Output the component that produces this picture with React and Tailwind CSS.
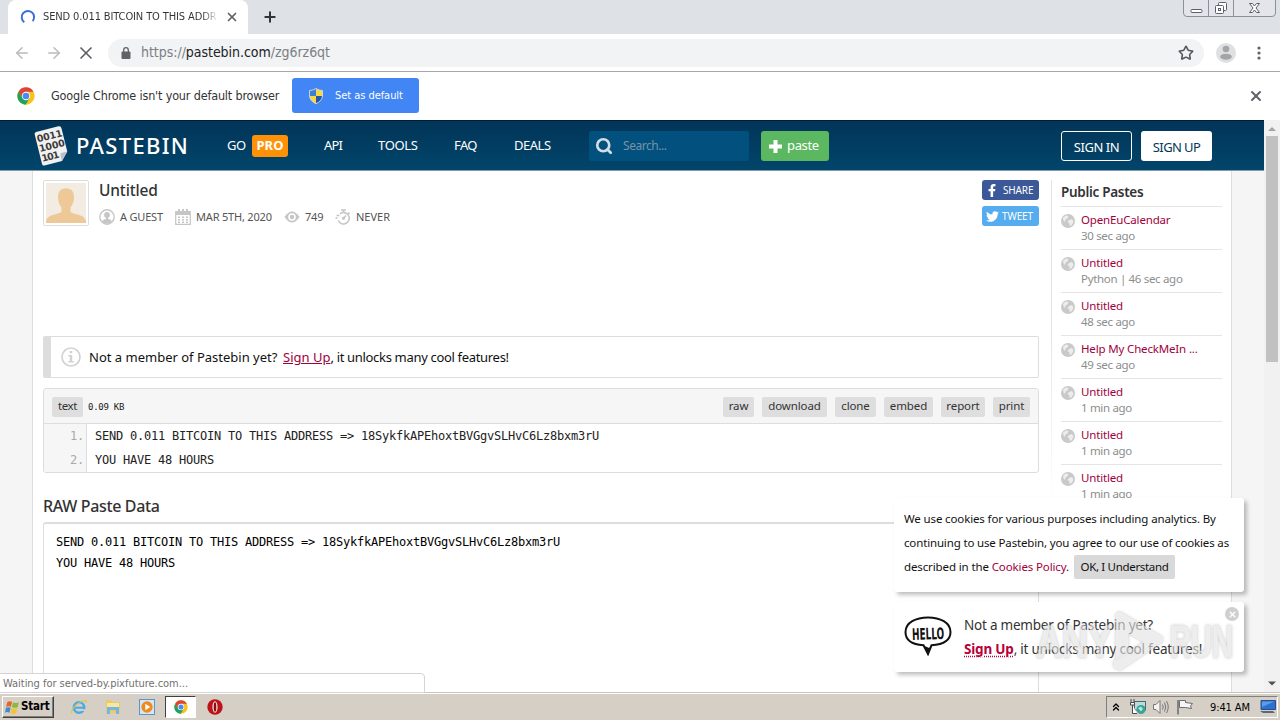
import {
    Star,
    Plus,
    X,
    Search,
    ArrowLeft,
    ArrowRight,
    ChevronsUp
} from "lucide-react";
import { FaFacebookF, FaTwitter } from "react-icons/fa";

const uiFont = "font-['DejaVu_Sans_Condensed','DejaVu_Sans',sans-serif]";
const pageFont = "font-['Noto_Sans',sans-serif]";
const monoFont = "font-['DejaVu_Sans_Mono',monospace]";

const publicPastes = [
    { title: "OpenEuCalendar", age: "30 sec ago" },
    { title: "Untitled", age: "Python | 46 sec ago" },
    { title: "Untitled", age: "48 sec ago" },
    { title: "Help My CheckMeIn ...", age: "49 sec ago" },
    { title: "Untitled", age: "1 min ago" },
    { title: "Untitled", age: "1 min ago" },
    { title: "Untitled", age: "1 min ago" }
];

const pasteActions = [
    { label: "raw", width: "w-[31px]" },
    { label: "download", width: "w-[65px]" },
    { label: "clone", width: "w-[41px]" },
    { label: "embed", width: "w-[49px]" },
    { label: "report", width: "w-[44px]" },
    { label: "print", width: "w-[37px]" }
];

const pasteLines = [
    "SEND 0.011 BITCOIN TO THIS ADDRESS => 18SykfkAPEhoxtBVGgvSLHvC6Lz8bxm3rU",
    "YOU HAVE 48 HOURS"
];

const ChromeLogo = ({ className }) => (
    <svg viewBox="0 0 24 24" className={className}>
        <circle cx="12" cy="12" r="11.5" fill="#fbc116" />
        <path d="M2 6.3A11.5 11.5 0 0 1 22 6.3L12 6.3L7.2 14.8Z" fill="#dd4637" />
        <path d="M2 6.3A11.5 11.5 0 0 0 11.5 23.5L16.8 14.8L12 12L7.2 14.8Z" fill="#1da261" />
        <circle cx="12" cy="12" r="5.6" fill="#fff" />
        <circle cx="12" cy="12" r="4.4" fill="#4a8af4" />
    </svg>
);

const ShieldLogo = () => (
    <svg viewBox="0 0 16 16" className="h-4 w-4">
        <path d="M8 .5C5.500 2 3.500 2.300 1.500 2.500V8H8Z" fill="#3c7fd6" />
        <path d="M8 .5C10.500 2 12.500 2.300 14.500 2.500V8H8Z" fill="#f8d847" />
        <path d="M1.500 8C1.800 12 5 14.500 8 15.700V8Z" fill="#f8d847" />
        <path d="M14.500 8C14.200 12 11 14.500 8 15.700V8Z" fill="#2459a8" />
        <path d="M8 .5C5.500 2 3.500 2.300 1.500 2.500V8C1.800 12 5 14.500 8 15.700C11 14.500 14.200 12 14.500 8V2.500C12.500 2.300 10.500 2 8 .5Z" fill="none" stroke="#c9d3dc" strokeWidth="1" />
    </svg>
);

const TabStrip = () => (
    <div className="relative flex h-[34px] bg-[#dee1e6] pl-2">
        <div className="flex h-[34px] w-[240px] items-center rounded-t-lg bg-white pl-3">
            <svg viewBox="0 0 16 16" className="h-4 w-4">
                <path d="M4.300 13.200A6.200 6.200 0 1 1 12.600 12.200" fill="none" stroke="#3b6fd4" strokeWidth="2" />
            </svg>
            <span className="ml-[7px] w-[177px] overflow-hidden whitespace-nowrap bg-gradient-to-r from-[#303236] from-90% to-transparent to-99% bg-clip-text text-[11px] tracking-[-0.12px] text-transparent">
                SEND 0.011 BITCOIN TO THIS ADDR
            </span>
            <X className="ml-[5px] h-[14px] w-[14px] text-[#5f6368]" strokeWidth={3} />
        </div>
        <div className="flex items-center pl-[14px]">
            <Plus className="h-4 w-4 text-[#303338]" strokeWidth={3} />
        </div>
        {/* Window buttons */}
        <div className="absolute right-[4px] top-[-3px] flex h-[20px] w-[93px] rounded-b-[4px] border border-[#8b909c] bg-[#e3e5ea]">
            <svg viewBox="0 0 91 18" className="h-[18px] w-[91px]" fill="none" stroke="#5a606c">
                <path d="M24.500 0V18M49.500 0V18" stroke="#8b909c" />
                <rect x="7" y="11.500" width="11" height="3" rx="1" fill="#fff" />
                <rect x="34.500" y="4.500" width="8" height="8" rx="1" fill="#fff" />
                <rect x="31.500" y="7.500" width="8" height="8" rx="1" fill="#fff" />
                <rect x="34.500" y="10.500" width="2" height="2" />
                <path d="M65.500 5.500h3l2 2.500 2-2.500h3l-3.500 4.500 3.500 4.500h-3l-2-2.500-2 2.500h-3l3.500-4.500Z" fill="#fff" />
            </svg>
        </div>
    </div>
);

const Toolbar = () => (
    <div className="flex h-[38px] items-center border-b border-[#a8a8a8] bg-white pl-[13px]">
        <ArrowLeft className="h-[18px] w-[18px] text-[#b9bbbe]" />
        <ArrowRight className="ml-[14px] h-[18px] w-[18px] text-[#b9bbbe]" />
        <X className="ml-[13px] h-5 w-5 text-[#5a5d61]" />
        <div className="ml-[12px] flex h-[28px] w-[1096px] items-center rounded-full bg-[#f1f3f4] pl-[12px]">
            <svg viewBox="0 0 12 12" className="h-3 w-3">
                <rect x="1.500" y="4.500" width="9" height="7.500" rx="1" fill="#5f6368" />
                <path d="M3.700 5V3A2.300 2.300 0 0 1 8.300 3V5" fill="none" stroke="#5f6368" strokeWidth="1.300" />
            </svg>
            <span className="ml-[9px] whitespace-nowrap text-[14px] tracking-[-0.04px] text-[#7b7f84]">
                https://<span className="text-[#202124]">pastebin.com</span>/zg6rz6qt
            </span>
            <Star className="ml-auto mr-[10px] h-4 w-4 text-[#54575b]" strokeWidth={2.4} />
        </div>
        <svg viewBox="0 0 20 20" className="ml-[12px] h-5 w-5">
            <circle cx="10" cy="10" r="10" fill="#dfe0e2" />
            <circle cx="10" cy="6" r="3.300" fill="#a3a5a8" />
            <ellipse cx="10" cy="13.700" rx="5.800" ry="3" fill="#a3a5a8" />
        </svg>
        <svg viewBox="0 0 4 14" className="ml-[21px] h-[14px] w-1" fill="#5f6368">
            <circle cx="2" cy="2" r="1.600" />
            <circle cx="2" cy="7" r="1.600" />
            <circle cx="2" cy="12" r="1.600" />
        </svg>
    </div>
);

const InfoBar = () => (
    <div className="flex h-[48px] items-center bg-white pl-[17px]">
        <ChromeLogo className="h-[18px] w-[18px]" />
        <span className="ml-[16px] w-[241px] whitespace-nowrap text-[12.500px] tracking-[-0.17px] text-[#333]">
            Google Chrome isn't your default browser
        </span>
        <button className="mb-px flex h-[35px] w-[127px] items-center rounded-[3px] bg-[#4285f4] pl-4 text-white">
            <ShieldLogo />
            <span className="ml-[11px] whitespace-nowrap pt-[2px] text-[11px] tracking-[-0.05px]">Set as default</span>
        </button>
        <X className="ml-auto mr-[16px] h-4 w-4 text-[#5f6368]" strokeWidth={3} />
    </div>
);

const PastebinLogo = () => (
    <svg viewBox="0 0 36 40" className="h-[40px] w-[36px]">
        <g transform="rotate(-14 18 20)">
            <path d="M6 2.500H29Q31.500 2.500 31.500 5V29L24 37H6Q4 37 4 35V5Q4 2.500 6 2.500Z" fill="#f1f1f1" />
            <path d="M31.500 29L24 37V31Q24 29 26 29Z" fill="#b9c2c9" />
            <g fontFamily="DejaVu Sans" fontWeight="bold" fontSize="9.500" fill="#3b3b3b">
                <text x="5" y="13" textLength="26">0011</text>
                <text x="5" y="23" textLength="26">1000</text>
                <text x="5" y="33" textLength="18">101</text>
            </g>
        </g>
    </svg>
);

const SiteHeader = () => (
    <header className="flex h-[51px] shrink-0 items-center whitespace-nowrap border-b border-t border-b-[#7e9aab] border-t-[#011f33] bg-gradient-to-b from-[#023558] to-[#02456b] pl-[34px] text-[13px] text-white">
        <PastebinLogo />
        <span className="ml-[6px] w-[151px] text-[22px] font-medium tracking-[1.3px]">PASTEBIN</span>
        <span className="w-[25px] tracking-[-0.5px]">GO</span>
        <span className="flex h-[22px] w-[36px] items-center justify-center rounded-[3px] bg-[#ff9107] text-[13px] font-bold">PRO</span>
        <span className="ml-[36px] w-[54px] tracking-[-0.8px]">API</span>
        <span className="w-[76px] tracking-[-0.31px]">TOOLS</span>
        <span className="w-[60px] tracking-[-0.6px]">FAQ</span>
        <span className="w-[75px] tracking-[-0.49px]">DEALS</span>
        <div className="flex h-[30px] w-[160px] items-center rounded-[2px] bg-[#02507d] pl-[6px]">
            <Search className="h-[18px] w-[18px] text-[#d3dde4]" strokeWidth={3.6} />
            <span className="ml-[10px] text-[12px] tracking-[-0.45px] text-[#7693a8]">Search...</span>
        </div>
        <button className="ml-[12px] flex h-[30px] w-[68px] items-center rounded-[3px] bg-[#5cb860] pl-[8px]">
            <svg viewBox="0 0 13 13" className="mt-px h-[13px] w-[13px]" fill="#fff">
                <path d="M4.500 0H8.500V4.500H13V8.500H8.500V13H4.500V8.500H0V4.500H4.500Z" />
            </svg>
            <span className="ml-[5px] text-[13px] tracking-[-0.35px]">paste</span>
        </button>
        <button className="ml-[232px] h-[30px] w-[71px] rounded-[3px] border border-white pt-[4px] tracking-[-0.43px]">SIGN IN</button>
        <button className="ml-[9px] h-[30px] w-[71px] rounded-[3px] bg-white pt-[4px] tracking-[-0.61px] text-[#023859]">SIGN UP</button>
    </header>
);

const Avatar = () => (
    <div className="h-[46px] w-[46px] rounded-[2px] border border-[#ddd] bg-white p-[2px]">
        <svg viewBox="0 0 40 40" className="h-[40px] w-[40px]">
            <rect width="40" height="40" fill="#f2ece3" />
            <path d="M12 14C12 8 15 5.500 20 5.500S28 8 28 14C28 19 26.500 22 24.500 24.500V29C29 32 38 31 40 38V40H0V38C2 31 11 32 15.500 29V24.500C13.500 22 12 19 12 14Z" fill="#eec896" />
        </svg>
    </div>
);

const PasteInfo = () => (
    <div className="flex h-[16px] items-center whitespace-nowrap text-[11px] text-[#555]">
        <svg viewBox="0 0 16 16" className="h-4 w-4" fill="#c6c6c6">
            <circle cx="8" cy="8" r="7.200" fill="none" stroke="#c6c6c6" strokeWidth="1.400" />
            <circle cx="8" cy="6" r="2.900" />
            <path d="M7 8H9V10Q12.500 10.500 12.800 12.500Q8 17 3.200 12.500Q3.500 10.500 7 10Z" />
        </svg>
        <span className="ml-[5px] w-[55px] tracking-[-0.2px]">A GUEST</span>
        <svg viewBox="0 0 16 16" className="h-4 w-4" fill="#c6c6c6">
            <path d="M.700 2.500H15.300V15.300H.700Z" fill="none" stroke="#c6c6c6" strokeWidth="1.200" />
            <path d="M1 2.500H15V6H1ZM3 0H5V3H3ZM7 0H9V3H7ZM11 0H13V3H11Z" />
            <path d="M3 7.500H5V9H3ZM7 7.500H9V9H7ZM11 7.500H13V9H11ZM3 10H5V11.500H3ZM7 10H9V11.500H7ZM11 10H13V11.500H11ZM3 12.500H5V14H3ZM7 12.500H9V14H7ZM11 12.500H13V14H11Z" />
        </svg>
        <span className="ml-[5px] w-[88px] tracking-[-0.19px]">MAR 5TH, 2020</span>
        <svg viewBox="0 0 16 16" className="h-4 w-4">
            <path d="M.5 8Q8-3 15.500 8Q8 19 .5 8Z" fill="#c6c6c6" />
            <circle cx="8" cy="8" r="3.800" fill="#fff" />
            <circle cx="8" cy="8" r="2.200" fill="#c6c6c6" />
        </svg>
        <span className="ml-[5px] w-[30px] tracking-[-0.2px]">749</span>
        <svg viewBox="0 0 16 16" className="h-4 w-4" fill="none" stroke="#c6c6c6" strokeWidth="1.600">
            <path d="M5 4.800A5.700 5.700 0 1 1 3.300 11.500" />
            <path d="M6 1H11M8.500 1V4M13 3.500L14.500 5M8.500 9.300L11 6.500M1.500 6.500H4.500M.5 9H2.500" />
            <circle cx="8.500" cy="9.300" r=".8" />
        </svg>
        <span className="ml-[5px]">NEVER</span>
    </div>
);

const ShareButtons = () => (
    <div className="ml-auto flex w-[57px] flex-col gap-[6px] text-[10px] text-white">
        <button className="flex h-5 items-center rounded-[3px] bg-[#3b5998] pl-[5px]">
            <FaFacebookF className="h-[13px] w-[10px]" />
            <span className="ml-[6px] tracking-[-0.15px]">SHARE</span>
        </button>
        <button className="flex h-5 items-center rounded-[3px] bg-[#55acee] pl-[4px]">
            <FaTwitter className="h-[13px] w-[13px]" />
            <span className="ml-[3px] tracking-[-0.1px]">TWEET</span>
        </button>
    </div>
);

const PasteMain = () => (
    <main className="flex w-[996px] shrink-0 flex-col whitespace-nowrap pt-[9px]">
        <div className="flex h-[46px] shrink-0">
            <Avatar />
            <div className="ml-[10px]">
                <h1 className="h-[29px] text-[15.500px] font-medium leading-[21px] tracking-[-0.15px] text-[#333]">Untitled</h1>
                <PasteInfo />
            </div>
            <ShareButtons />
        </div>

        <div className="mt-[110px] flex h-[42px] shrink-0 items-center rounded-[2px] border border-l-8 border-[#ddd] pl-[10px] text-[13px] text-[#111]">
            <svg viewBox="0 0 20 20" className="h-5 w-5">
                <circle cx="10" cy="10" r="9" fill="none" stroke="#d2d2d2" strokeWidth="1.700" />
                <path d="M8.800 4H11.200V6.300H8.800ZM7.300 8H11.200V14H12.700V15.500H7.300V14H8.800V9.500H7.300Z" fill="#d2d2d2" />
            </svg>
            <p className="ml-[8px] flex pt-[2px]">
                <span className="w-[194px]">Not a member of Pastebin yet?</span>
                <a className="text-[#a0003c] underline">Sign Up</a>
                <span className="tracking-[-0.32px]">, it unlocks many cool features!</span>
            </p>
        </div>

        <section className="mt-[10px] h-[85px] shrink-0 overflow-hidden rounded-[3px] border border-[#ddd]">
            <div className="flex h-[35px] items-center border-b border-[#ddd] bg-[#f6f6f6] px-[8px] pt-px text-[11.500px] text-[#333]">
                <span className="flex h-5 w-[31px] items-center justify-center rounded-[2px] bg-[#dedede] pb-px tracking-[-0.35px]">text</span>
                <span className={`ml-[5px] pt-[2px] text-[9px] tracking-[-0.25px] text-[#222] ${monoFont}`}>0.09 KB</span>
                <div className="ml-auto flex gap-2">
                    {pasteActions.map((action) => (
                        <button key={action.label} className={`flex h-5 items-center justify-center rounded-[2px] bg-[#dedede] pb-px tracking-[-0.1px] ${action.width}`}>
                            {action.label}
                        </button>
                    ))}
                </div>
            </div>
            <ol className={`text-[12px] leading-[24px] tracking-[-0.224px] ${monoFont}`}>
                {pasteLines.map((line, i) => (
                    <li key={line} className="flex h-6">
                        <span className="w-[43px] border-r border-[#ddd] bg-[#f6f6f6] pr-[2px] text-right text-[#aaa]">{i + 1}.</span>
                        <span className="pl-[8px] text-[#222]">{line}</span>
                    </li>
                ))}
            </ol>
        </section>

        <h2 className="mt-[21px] h-[28px] shrink-0 text-[16px] font-medium leading-[24px] tracking-[-0.35px] text-[#333]">RAW Paste Data</h2>
        <div className={`h-[200px] shrink-0 rounded-[3px] border border-t-2 border-[#ddd] pl-3 pt-[8px] text-[12px] leading-[21px] tracking-[-0.224px] text-black ${monoFont}`}>
            {pasteLines.map((line) => (
                <p key={line}>{line}</p>
            ))}
        </div>
    </main>
);

const Sidebar = () => (
    <aside className="ml-[12px] mt-[9px] flex h-[330px] w-[171px] whitespace-nowrap">
        <div className="w-px shrink-0 bg-gradient-to-b from-[#e2e2e2] from-40% to-white" />
        <div className="ml-[9px] w-[161px] shrink-0">
            <h3 className="h-[26px] text-[13.500px] font-semibold leading-[24px] tracking-[-0.3px] text-[#333]">Public Pastes</h3>
            {publicPastes.map((paste, i) => (
                <div key={i} className="flex h-[43px] border-t border-[#e4e4e4] pt-[5px]">
                    <svg viewBox="0 0 14 14" className="mt-[2px] h-[14px] w-[14px]">
                        <circle cx="7" cy="7" r="7" fill="#c9c9c9" />
                        <path d="M2 3.500L5 1.500L7.500 2L6.500 4.500L4.500 5.500L4 8L2.500 6.500ZM8 6L11 5L12.500 7.500L11 11L8.500 12L8.500 9.500L6.500 8Z" fill="#ededed" />
                    </svg>
                    <div className="ml-[6px] text-[11.500px] leading-[16px]">
                        <p className="tracking-[-0.16px] text-[#a0003c]">{paste.title}</p>
                        <p className="tracking-[-0.32px] text-[#8d8d8d]">{paste.age}</p>
                    </div>
                </div>
            ))}
        </div>
    </aside>
);

const Scrollbar = () => (
    <div className="flex w-4 flex-col items-center bg-[#f1f1f1]">
        <svg viewBox="0 0 16 16" className="h-4 w-4">
            <path d="M4 11L8 7L12 11Z" fill="#a3a3a3" />
        </svg>
        <div className="h-[226px] w-[12px] bg-[#c1c1c1]" />
        <svg viewBox="0 0 16 16" className="mt-auto h-4 w-4">
            <path d="M4 5.500H12L8 9.500Z" fill="#505050" />
        </svg>
    </div>
);

const CookieNotice = () => (
    <div className="absolute left-[894px] top-[498px] h-[94px] w-[350px] whitespace-nowrap rounded-[3px] bg-white pl-[10px] pt-[9px] text-[11.500px] leading-[24px] tracking-[-0.13px] text-[#111] shadow-[3px_3px_4px_rgba(0,0,0,0.25)]">
        <p>We use cookies for various purposes including analytics. By</p>
        <p className="tracking-[-0.15px]">continuing to use Pastebin, you agree to our use of cookies as</p>
        <div className="flex items-center">
            <span className="w-[170px] tracking-[-0.12px]">
                described in the <a className="text-[#a0003c]">Cookies Policy</a>.
            </span>
            <button className="h-6 w-[101px] rounded-[2px] bg-[#d9d9d9] leading-[22px] tracking-[-0.32px]">OK, I Understand</button>
        </div>
    </div>
);

const HelloNotice = () => (
    <div className="absolute left-[894px] top-[602px] flex h-[70px] w-[350px] whitespace-nowrap rounded-[3px] bg-white pl-[10px] shadow-[3px_3px_4px_rgba(0,0,0,0.25)]">
        <svg viewBox="0 0 48 40" className="mt-[14px] h-[40px] w-[48px]">
            <path d="M19.500 29.300C8 28.500 1.500 24 1.500 16C1.500 6.500 12 1.500 24 1.500S46.500 6.500 46.500 16C46.500 24.500 39 28.500 27.500 29.300L24 38Z" fill="#fff" stroke="#111" strokeWidth="2" />
            <path d="M20 30L24 39L27.500 30L25 32L23 31Z" fill="#111" />
            <text x="8" y="23.500" textLength="32" lengthAdjust="spacingAndGlyphs" fontFamily="DejaVu Sans Condensed" fontWeight="bold" fontSize="16" transform="rotate(-2 24 16)" fill="#111">HELLO</text>
        </svg>
        <div className="ml-[12px] pt-[11px] text-[13.500px] leading-[24px] text-[#333]">
            <p className="tracking-[-0.23px]">Not a member of Pastebin yet?</p>
            <p>
                <a className="font-bold tracking-[-0.2px] text-[#b8003c] underline decoration-dotted underline-offset-2">Sign Up</a>
                <span className="tracking-[-0.23px]">, it unlocks many cool features!</span>
            </p>
        </div>
    </div>
);

const Watermark = () => (
    <svg viewBox="0 0 200 68" className="absolute left-[1036px] top-[606px] h-[68px] w-[200px] opacity-75 drop-shadow-[0_0_1.5px_#9a9a9a]">
        <g fill="#fff" fillOpacity=".6" stroke="#e6e6e6" strokeWidth=".8" fontFamily="Liberation Sans" fontSize="45" fontWeight="bold">
            <text x="0" y="51" textLength="76" lengthAdjust="spacingAndGlyphs">ANY</text>
            <path d="M80 8L84 6L126 31L126 36L84 64L78 61V55L108 36L92 27V46L80 53Z" />
            <text x="134" y="51" textLength="63" lengthAdjust="spacingAndGlyphs">RUN</text>
        </g>
    </svg>
);

const Taskbar = () => (
    <footer className="flex h-[28px] items-center whitespace-nowrap border-t border-[#c9c5b8] bg-[#d6cfc6] pl-[2px] shadow-[inset_0_1px_0_#fff]">
        <div className="mt-px flex h-[22px] w-[52px] items-center border border-b-[#404040] border-l-white border-r-[#404040] border-t-white pl-[2px] shadow-[inset_-1px_-1px_0_#808080]">
            <svg viewBox="0 0 16 16" className="h-[15px] w-[15px]">
                <path d="M2.500 2Q5 .5 7.500 2L6.300 7.300Q3.800 6 1.200 7.300Z" fill="#e8622c" />
                <path d="M8.500 2.500Q11 4 14.800 2.300L13.500 7.700Q10.500 9 7.300 7.700Z" fill="#8bbb3c" />
                <path d="M1 8.300Q3.500 7 6 8.300L4.700 13.500Q2.200 12 0 13.500Z" fill="#3d8bd0" />
                <path d="M7 8.700Q10 10 13.200 8.700L12 14Q9 15.500 5.700 14Z" fill="#f5c336" />
            </svg>
            <span className="ml-[1px] text-[11.500px] font-bold tracking-[-0.2px] text-black">Start</span>
        </div>

        {/* Quick launch */}
        <svg viewBox="0 0 16 16" className="ml-[17px] h-4 w-4" fill="none">
            <circle cx="8" cy="8.500" r="5.200" stroke="#47ace6" strokeWidth="2.600" />
            <path d="M4 8.700H13" stroke="#47ace6" strokeWidth="2" />
            <path d="M10 10.200H16V12H10Z" fill="#d6cfc6" />
            <path d="M1 14.500C-1 12 6 2.500 14.500 1.500C16 1.500 15.500 3 14.800 4" stroke="#e8c14a" strokeWidth="1.200" />
        </svg>
        <svg viewBox="0 0 16 16" className="ml-[18px] h-4 w-4">
            <path d="M1 1H6L7 3H15V14H1Z" fill="#ecca66" />
            <path d="M2 4H14V9H2Z" fill="#f8e6a4" />
            <path d="M2 8H14V15H11V11H5V15H2Z" fill="#72b7e2" />
        </svg>
        <svg viewBox="0 0 16 16" className="ml-[18px] h-4 w-4">
            <rect x=".5" y=".5" width="15" height="15" fill="#d5e7f5" stroke="#5a96c8" />
            <circle cx="8" cy="8" r="5.700" fill="#f18a1c" />
            <path d="M6.300 4.800L11.300 8L6.300 11.200Z" fill="#fff" />
        </svg>
        <div className="ml-[10px] mt-px flex h-[22px] w-[31px] items-center justify-center border border-b-white border-l-[#404040] border-r-white border-t-[#404040] bg-white">
            <ChromeLogo className="h-[14px] w-[14px]" />
        </div>
        <svg viewBox="0 0 16 16" className="ml-[11px] h-4 w-4">
            <circle cx="8" cy="8" r="7.700" fill="#bd1219" />
            <ellipse cx="8" cy="8" rx="2.600" ry="5.700" fill="#f5e4e2" />
            <ellipse cx="8" cy="8" rx="1.300" ry="4.800" fill="#8e0b10" />
        </svg>

        {/* System tray */}
        <div className="ml-auto mr-[2px] mt-px flex h-[22px] w-[172px] items-center border border-b-white border-l-[#808080] border-r-white border-t-[#808080] pl-[3px]">
            <ChevronsUp className="h-[12px] w-[12px] text-black" strokeWidth={2.6} />
            <svg viewBox="0 0 16 16" className="ml-[8px] h-4 w-4">
                <rect x="4.500" y="2.500" width="11" height="8.500" fill="#b9dce0" stroke="#4e6670" />
                <circle cx="11" cy="10.500" r="4.500" fill="#3aa391" />
                <path d="M8 9L11 7.500L13 10L11 12.500Z" fill="#b5e2e4" />
                <path d="M1 0V3M4 0V3M.5 3.500H4.500V6H.5ZM2.500 6V14.500H7" fill="#fff" stroke="#4c4c4c" />
            </svg>
            <svg viewBox="0 0 16 16" className="ml-[7px] h-4 w-4" fill="none" stroke="#777">
                <path d="M.5 5.500H3L7 1.500V14.500L3 10.500H.5Z" fill="#f3f3f3" />
                <path d="M9.500 5.500Q11 8 9.500 10.500M11.500 3.500Q14 8 11.500 12.500M13.500 2Q17 8 13.500 14" />
            </svg>
            <svg viewBox="0 0 16 16" className="ml-[8px] h-4 w-4" fill="#f5f5f5" stroke="#6b6b6b">
                <path d="M2.500 1.500H8.500V3.500L15.500 4.500L13.500 7L14.500 9.500L8.500 8.500H2.500Z" />
                <path d="M1 1V15.500" strokeWidth="1.500" />
            </svg>
            <span className="ml-[17px] w-[42px] pt-[2px] text-[11px] tracking-[-0.12px] text-black">9:41 AM</span>
            <svg viewBox="0 0 16 14" className="ml-[8px] h-[14px] w-4">
                <path d="M1 .5H15.500V9.500H1Z" fill="#2c6fd0" stroke="#275089" />
                <path d="M2 1.500H14.500L2 7Z" fill="#5e9ae8" />
                <path d="M0 11H13L15 13H3Z" fill="#5b6a78" />
            </svg>
        </div>
    </footer>
);

const App = () => {
    return (
        <div className={`relative flex h-[720px] w-[1280px] flex-col overflow-hidden bg-white ${uiFont}`}>
            <TabStrip />
            <Toolbar />
            <InfoBar />
            <div className={`flex h-[572px] ${pageFont}`}>
                <div className="flex w-[1264px] flex-col overflow-hidden bg-[#f5f5f5]">
                    <SiteHeader />
                    <div className="ml-[32px] flex h-[521px] w-[1200px] overflow-hidden border-x border-[#ddd] bg-white pl-[10px]">
                        <PasteMain />
                        <Sidebar />
                    </div>
                </div>
                <Scrollbar />
            </div>
            <Taskbar />

            {/* Floating layers */}
            <div className={pageFont}>
                <CookieNotice />
                <HelloNotice />
            </div>
            <Watermark />
            <div className="absolute left-[1225px] top-[607px] flex h-[14px] w-[14px] items-center justify-center rounded-full bg-[#cfcfcf]">
                <X className="h-[9px] w-[9px] text-white" strokeWidth={4} />
            </div>
            <div className="absolute left-[-1px] top-[673px] h-[20px] w-[426px] whitespace-nowrap rounded-tr-[4px] border border-[#d4d4d4] bg-white pl-[3px] text-[11px] leading-[20px] tracking-[-0.03px] text-[#707070]">
                Waiting for served-by.pixfuture.com...
            </div>
        </div>
    );
};

export default App;
